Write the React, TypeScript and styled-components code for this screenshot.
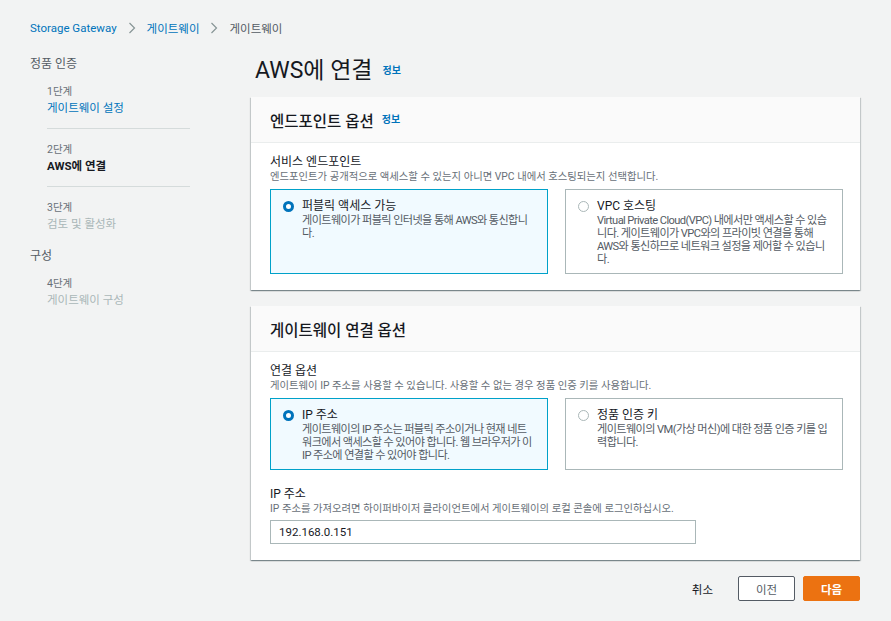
import React, { FC } from "react";
import styled, { createGlobalStyle } from "styled-components";

const GlobalStyle = createGlobalStyle`
  body {
    margin: 0;
    background: #f2f3f3;
    font-family: Roboto, "Noto Sans CJK KR", sans-serif;
    color: #16191f;
  }
`;

const Page = styled.div`
  padding: 20px 31px 0 30px;
  min-height: 601px;
`;

const Crumbs = styled.div`
  display: flex;
  align-items: center;
  gap: 11px;
  height: 16px;
  font-size: 11.5px;
`;

const Crumb = styled.span<{ current?: boolean }>`
  color: ${({ current }) => (current ? "#545b64" : "#0073bb")};
`;

const Layout = styled.div`
  display: grid;
  grid-template-columns: 221px 1fr;
  margin-top: 12px;
`;

const Nav = styled.nav`
  padding-top: 9px;
`;

const NavTitle = styled.div<{ gap?: boolean }>`
  font-size: 12px;
  line-height: 14px;
  color: #545b64;
  margin-top: ${({ gap }) => (gap ? "5px" : "0")};
`;

const StepList = styled.div`
  margin-left: 17px;
  width: 143px;
`;

const Step = styled.div<{ divider?: boolean }>`
  padding: 13px 0 12px;
  border-bottom: ${({ divider }) => (divider ? "1px solid #d5dbdb" : "none")};
`;

const StepNum = styled.div`
  font-size: 10.5px;
  line-height: 16px;
  color: #687078;
`;

const StepLabel = styled.div<{ state: "link" | "current" | "disabled" }>`
  font-size: 11.5px;
  line-height: 16px;
  color: ${({ state }) =>
    state === "link" ? "#0073bb" : state === "current" ? "#16191f" : "#aab7b8"};
  font-weight: ${({ state }) => (state === "current" ? 700 : 400)};
`;

const Main = styled.main`
  display: flex;
  flex-direction: column;
`;

const Title = styled.h1`
  margin: 0 0 9px;
  padding-left: 4px;
  height: 40px;
  font-size: 23px;
  font-weight: 400;
  display: flex;
  align-items: center;
  gap: 10px;
`;

const Info = styled.span`
  font-size: 10px;
  line-height: 14px;
  font-weight: 700;
  color: #0073bb;
`;

const TitleInfo = styled(Info)`
  margin-top: 6px;
`;

const Panel = styled.section`
  background: #fff;
  box-shadow: 0 1px 1px 0 rgba(0, 28, 36, 0.3),
    1px 1px 1px 0 rgba(0, 28, 36, 0.15), -1px 1px 1px 0 rgba(0, 28, 36, 0.15);
  margin-bottom: 16px;
`;

const PanelHeader = styled.div`
  height: 45px;
  background: #fafafa;
  border-bottom: 1px solid #eaeded;
  padding: 0 19px;
  display: flex;
  align-items: center;
  gap: 8px;
`;

const PanelTitle = styled.h2`
  margin: 0;
  font-size: 15.5px;
  font-weight: 500;
`;

const PanelBody = styled.div`
  padding: 11px 17px 16px 19px;
`;

const FieldLabel = styled.div<{ spaced?: boolean }>`
  font-size: 12px;
  line-height: 16px;
  margin-top: ${({ spaced }) => (spaced ? "16px" : "0")};
`;

const FieldDesc = styled.div`
  font-size: 10.35px;
  line-height: 14px;
  color: #687078;
`;

const Tiles = styled.div`
  display: grid;
  grid-template-columns: 1fr 1fr;
  gap: 17px;
  margin-top: 5px;
`;

const Tile = styled.div<{ selected?: boolean }>`
  display: flex;
  gap: 8px;
  padding: 8px 11px 7px 12px;
  border: 1px solid ${({ selected }) => (selected ? "#00a1c9" : "#aab7b8")};
  background: ${({ selected }) => (selected ? "#f1faff" : "#fff")};
`;

const Radio = styled.span<{ checked?: boolean }>`
  flex: none;
  box-sizing: border-box;
  width: 11px;
  height: 11px;
  margin-top: 3px;
  border-radius: 50%;
  background: #fff;
  border: ${({ checked }) => (checked ? "3px solid #0073bb" : "1px solid #aab7b8")};
`;

const TileTitle = styled.div`
  font-size: 12px;
  line-height: 16px;
`;

const TileDesc = styled.div`
  font-size: 11.15px;
  letter-spacing: -0.6px;
  line-height: 13px;
  color: #545b64;
`;

const Input = styled.input`
  display: block;
  box-sizing: border-box;
  margin-top: 4px;
  width: 426px;
  height: 24px;
  padding: 0 8px;
  border: 1px solid #aab7b8;
  font-family: inherit;
  font-size: 11.5px;
  color: #16191f;
`;

const Footer = styled.div`
  display: flex;
  justify-content: flex-end;
  align-items: center;
  gap: 8px;
`;

const Cancel = styled.span`
  font-size: 11.5px;
  margin-right: 17px;
`;

const Button = styled.button<{ primary?: boolean }>`
  width: 57px;
  height: 25px;
  font-family: inherit;
  font-size: 11.5px;
  font-weight: ${({ primary }) => (primary ? 700 : 400)};
  color: ${({ primary }) => (primary ? "#fff" : "#545b64")};
  background: ${({ primary }) => (primary ? "#ec7211" : "#fff")};
  border: 1px solid ${({ primary }) => (primary ? "#ec7211" : "#545b64")};
  border-radius: 2px;
`;

const Chevron: FC = () => (
  <svg width="8" height="12" viewBox="0 0 8 12">
    <polyline points="1.5,1 6.5,6 1.5,11" fill="none" stroke="#879596" strokeWidth="1.2" />
  </svg>
);

const endpointOptions = [
  {
    title: "퍼블릭 액세스 가능",
    desc: "게이트웨이가 퍼블릭 인터넷을 통해 AWS와 통신합니다.",
    checked: true,
  },
  {
    title: "VPC 호스팅",
    desc: "Virtual Private Cloud(VPC) 내에서만 액세스할 수 있습니다. 게이트웨이가 VPC와의 프라이빗 연결을 통해 AWS와 통신하므로 네트워크 설정을 제어할 수 있습니다.",
  },
];

const connectOptions = [
  {
    title: "IP 주소",
    desc: "게이트웨이의 IP 주소는 퍼블릭 주소이거나 현재 네트워크에서 액세스할 수 있어야 합니다. 웹 브라우저가 이 IP 주소에 연결할 수 있어야 합니다.",
    checked: true,
  },
  {
    title: "정품 인증 키",
    desc: "게이트웨이의 VM(가상 머신)에 대한 정품 인증 키를 입력합니다.",
  },
];

type Option = { title: string; desc: string; checked?: boolean };

const OptionTiles: FC<{ options: Option[] }> = ({ options }) => (
  <Tiles>
    {options.map((o) => (
      <Tile key={o.title} selected={o.checked}>
        <Radio checked={o.checked} />
        <div>
          <TileTitle>{o.title}</TileTitle>
          <TileDesc>{o.desc}</TileDesc>
        </div>
      </Tile>
    ))}
  </Tiles>
);

export default function App() {
  return (
    <Page>
      <GlobalStyle />
      <Crumbs>
        <Crumb>Storage Gateway</Crumb>
        <Chevron />
        <Crumb>게이트웨이</Crumb>
        <Chevron />
        <Crumb current>게이트웨이</Crumb>
      </Crumbs>
      <Layout>
        <Nav>
          <NavTitle>정품 인증</NavTitle>
          <StepList>
            <Step divider>
              <StepNum>1단계</StepNum>
              <StepLabel state="link">게이트웨이 설정</StepLabel>
            </Step>
            <Step divider>
              <StepNum>2단계</StepNum>
              <StepLabel state="current">AWS에 연결</StepLabel>
            </Step>
            <Step>
              <StepNum>3단계</StepNum>
              <StepLabel state="disabled">검토 및 활성화</StepLabel>
            </Step>
          </StepList>
          <NavTitle gap>구성</NavTitle>
          <StepList>
            <Step>
              <StepNum>4단계</StepNum>
              <StepLabel state="disabled">게이트웨이 구성</StepLabel>
            </Step>
          </StepList>
        </Nav>
        <Main>
          <Title>
            AWS에 연결 <TitleInfo>정보</TitleInfo>
          </Title>
          <Panel>
            <PanelHeader>
              <PanelTitle>엔드포인트 옵션</PanelTitle>
              <Info>정보</Info>
            </PanelHeader>
            <PanelBody>
              <FieldLabel>서비스 엔드포인트</FieldLabel>
              <FieldDesc>
                엔드포인트가 공개적으로 액세스할 수 있는지 아니면 VPC 내에서 호스팅되는지 선택합니다.
              </FieldDesc>
              <OptionTiles options={endpointOptions} />
            </PanelBody>
          </Panel>
          <Panel>
            <PanelHeader>
              <PanelTitle>게이트웨이 연결 옵션</PanelTitle>
            </PanelHeader>
            <PanelBody>
              <FieldLabel>연결 옵션</FieldLabel>
              <FieldDesc>
                게이트웨이 IP 주소를 사용할 수 있습니다. 사용할 수 없는 경우 정품 인증 키를 사용합니다.
              </FieldDesc>
              <OptionTiles options={connectOptions} />
              <FieldLabel spaced>IP 주소</FieldLabel>
              <FieldDesc>
                IP 주소를 가져오려면 하이퍼바이저 클라이언트에서 게이트웨이의 로컬 콘솔에 로그인하십시오.
              </FieldDesc>
              <Input defaultValue="192.168.0.151" />
            </PanelBody>
          </Panel>
          <Footer>
            <Cancel>취소</Cancel>
            <Button>이전</Button>
            <Button primary>다음</Button>
          </Footer>
        </Main>
      </Layout>
    </Page>
  );
}
